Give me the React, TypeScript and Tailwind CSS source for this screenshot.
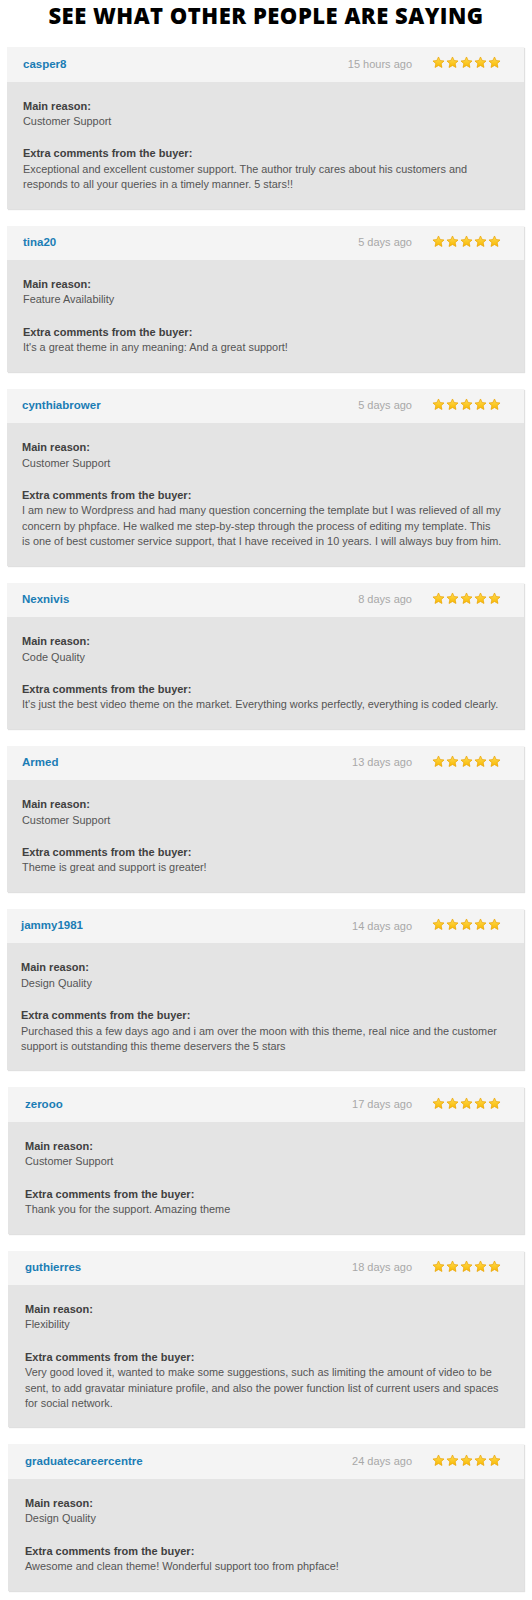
import React from "react";

type Review = {
  user: string;
  when: string;
  reason: string;
  comment: string[];
  ml: string;
  pl: string;
};

const reviews: Review[] = [
  {
    user: "casper8",
    when: "15 hours ago",
    reason: "Customer Support",
    comment: [
      "Exceptional and excellent customer support. The author truly cares about his customers and",
      "responds to all your queries in a timely manner. 5 stars!!",
    ],
    ml: "ml-[7px]",
    pl: "pl-[16px]",
  },
  {
    user: "tina20",
    when: "5 days ago",
    reason: "Feature Availability",
    comment: ["It's a great theme in any meaning: And a great support!"],
    ml: "ml-[7px]",
    pl: "pl-[16px]",
  },
  {
    user: "cynthiabrower",
    when: "5 days ago",
    reason: "Customer Support",
    comment: [
      "I am new to Wordpress and had many question concerning the template but I was relieved of all my",
      "concern by phpface. He walked me step-by-step through the process of editing my template. This",
      "is one of best customer service support, that I have received in 10 years. I will always buy from him.",
    ],
    ml: "ml-[7px]",
    pl: "pl-[15px]",
  },
  {
    user: "Nexnivis",
    when: "8 days ago",
    reason: "Code Quality",
    comment: [
      "It's just the best video theme on the market. Everything works perfectly, everything is coded clearly.",
    ],
    ml: "ml-[7px]",
    pl: "pl-[15px]",
  },
  {
    user: "Armed",
    when: "13 days ago",
    reason: "Customer Support",
    comment: ["Theme is great and support is greater!"],
    ml: "ml-[7px]",
    pl: "pl-[15px]",
  },
  {
    user: "jammy1981",
    when: "14 days ago",
    reason: "Design Quality",
    comment: [
      "Purchased this a few days ago and i am over the moon with this theme, real nice and the customer",
      "support is outstanding this theme deservers the 5 stars",
    ],
    ml: "ml-[7px]",
    pl: "pl-[14px]",
  },
  {
    user: "zerooo",
    when: "17 days ago",
    reason: "Customer Support",
    comment: ["Thank you for the support. Amazing theme"],
    ml: "ml-[8px]",
    pl: "pl-[17px]",
  },
  {
    user: "guthierres",
    when: "18 days ago",
    reason: "Flexibility",
    comment: [
      "Very good loved it, wanted to make some suggestions, such as limiting the amount of video to be",
      "sent, to add gravatar miniature profile, and also the power function list of current users and spaces",
      "for social network.",
    ],
    ml: "ml-[8px]",
    pl: "pl-[17px]",
  },
  {
    user: "graduatecareercentre",
    when: "24 days ago",
    reason: "Design Quality",
    comment: ["Awesome and clean theme! Wonderful support too from phpface!"],
    ml: "ml-[8px]",
    pl: "pl-[17px]",
  },
];

function Star() {
  return (
    <svg width="13" height="13" viewBox="0 0 24 24" className="block">
      <defs>
        <linearGradient id="sg" x1="0" y1="0" x2="0" y2="1">
          <stop offset="0" stopColor="#ffdc55" />
          <stop offset="1" stopColor="#f8b800" />
        </linearGradient>
      </defs>
      <path
        d="M12 1.8l3.1 6.6 7.1.8-5.3 4.9 1.5 7.1L12 17.6l-6.4 3.6 1.5-7.1-5.3-4.9 7.1-.8z"
        fill="url(#sg)"
        stroke="#e9a300"
        strokeWidth="1.3"
        strokeLinejoin="round"
      />
    </svg>
  );
}

function Card({ r }: { r: Review }) {
  return (
    <div
      className={`${r.ml} mr-[8px] mt-[17px] first:mt-0 shadow-[1px_1px_1px_rgba(0,0,0,0.12)]`}
    >
      <div
        className={`h-[34.5px] bg-[#f4f4f4] flex items-center justify-between ${r.pl} pr-[23px]`}
      >
        <span className="text-[11.5px] font-bold text-[#1b7db5] leading-none">
          {r.user}
        </span>
        <div className="flex items-center">
          <span className="text-[11px] text-[#a8a8a8] leading-none">
            {r.when}
          </span>
          <div className="flex gap-[1px] ml-[20px] -mt-[3px]">
            <Star />
            <Star />
            <Star />
            <Star />
            <Star />
          </div>
        </div>
      </div>
      <div
        className={`bg-[#e4e4e4] ${r.pl} pr-[8px] pt-[17px] pb-[16px] text-[10.9px] leading-[15.4px] text-[#555]`}
      >
        <div className="font-bold text-[#404040] text-[11px]">Main reason:</div>
        <div>{r.reason}</div>
        <div className="font-bold text-[#404040] text-[11px] mt-[17px]">
          Extra comments from the buyer:
        </div>
        {r.comment.map((line, i) => (
          <div key={i} className="whitespace-nowrap">
            {line}
          </div>
        ))}
      </div>
    </div>
  );
}

export default function App() {
  return (
    <div
      className="w-[532px] bg-white pb-[7px]"
      style={{ fontFamily: "'Liberation Sans', Arial, sans-serif" }}
    >
      <h1
        className="text-center text-[22px] leading-[30px] h-[47px] text-black font-extrabold tracking-[0.5px]"
        style={{ fontFamily: "'Open Sans', 'DejaVu Sans', sans-serif" }}
      >
        SEE WHAT OTHER PEOPLE ARE SAYING
      </h1>
      <div className="flex flex-col">
        {reviews.map((r) => (
          <Card key={r.user} r={r} />
        ))}
      </div>
    </div>
  );
}
